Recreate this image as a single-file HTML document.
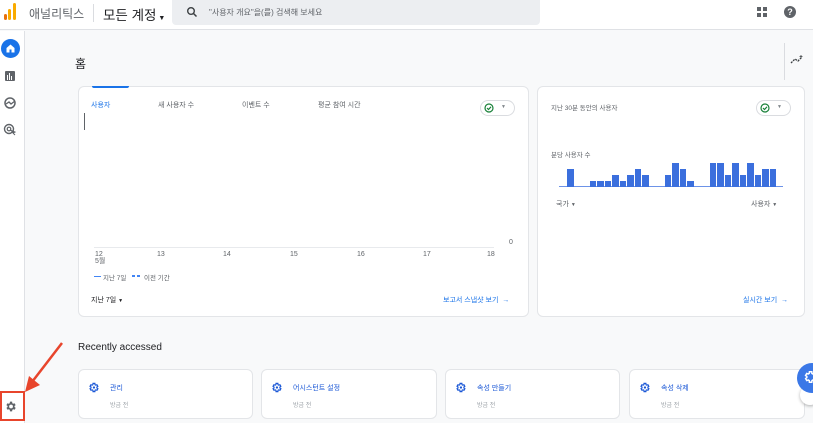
<!DOCTYPE html>
<html><head><meta charset="utf-8"><style>
*{margin:0;padding:0;box-sizing:border-box}
body{width:813px;height:423px;overflow:hidden;background:#f8f9fa;font-family:"Liberation Sans","Noto Sans CJK KR",sans-serif;position:relative;color:#3c4043}
.a{position:absolute}
.t{font-size:7px;color:#5f6368;white-space:nowrap}
.card{position:absolute;background:#fff;border:1px solid #e3e5e8;border-radius:6px}
.blue{color:#1a73e8}
.pill{position:absolute;width:35px;height:16px;border:1px solid #dadce0;border-radius:8px;background:#fff}
.bar{position:absolute;bottom:0;width:6.5px;margin-left:0.5px;background:#3b6fdd}
</style></head><body>
<!-- header -->
<div class="a" style="left:0;top:0;width:813px;height:30px;background:#fff;border-bottom:1px solid #dfe1e5"></div>
<div class="a" style="left:4px;top:14px;width:3px;height:6px;background:#e8710a;border-radius:2px"></div>
<div class="a" style="left:8px;top:9px;width:3px;height:11px;background:#f9ab00;border-radius:2px"></div>
<div class="a" style="left:13px;top:3px;width:3px;height:17px;background:#f9ab00;border-radius:2px"></div>
<div class="a" style="left:29px;top:5px;font-size:12px;color:#5f6368">애널리틱스</div>
<div class="a" style="left:93px;top:4px;width:1px;height:18px;background:#dadce0"></div>
<div class="a" style="left:103px;top:4px;font-size:13.5px;color:#202124">모든 계정<span style="font-size:7px"> ▼</span></div>
<div class="a" style="left:172px;top:0;width:368px;height:25px;background:#eceef1;border-radius:0 0 4px 4px"></div>
<svg class="a" style="left:186px;top:6px" width="12" height="12" viewBox="0 0 12 12"><circle cx="5" cy="5" r="3.3" fill="none" stroke="#3c4043" stroke-width="1.4"/><path d="M7.5 7.5L10.5 10.5" stroke="#3c4043" stroke-width="1.5"/></svg>
<div class="a" style="left:209px;top:7px;font-size:8px;color:#5f6368">"사용자 개요"을(를) 검색해 보세요</div>
<div class="a" style="left:757px;top:7px;width:4px;height:4px;background:#5f6368"></div>
<div class="a" style="left:763px;top:7px;width:4px;height:4px;background:#5f6368"></div>
<div class="a" style="left:757px;top:13px;width:4px;height:4px;background:#5f6368"></div>
<div class="a" style="left:763px;top:13px;width:4px;height:4px;background:#5f6368"></div>
<div class="a" style="left:784px;top:6px;width:12px;height:12px;border-radius:50%;background:#5f6368;color:#fff;font-size:9px;font-weight:bold;text-align:center;line-height:12px">?</div>
<!-- sidebar -->
<div class="a" style="left:0;top:31px;width:25px;height:392px;background:#fff;border-right:1px solid #dfe1e5"></div>
<div class="a" style="left:1px;top:39px;width:19px;height:19px;border-radius:50%;background:#1a73e8"></div>
<svg class="a" style="left:5px;top:43px" width="11" height="11" viewBox="0 0 11 11"><path d="M1.5 5L5.5 1.5L9.5 5V9.5H1.5Z" fill="#fff"/><rect x="4.5" y="6.5" width="2" height="3" fill="#1a73e8"/></svg>
<div class="a" style="left:5px;top:71px;width:10px;height:10px;background:#5f6368;border-radius:1px"></div>
<div class="a" style="left:7px;top:75px;width:1px;height:5px;background:#fff"></div>
<div class="a" style="left:9px;top:73px;width:1px;height:7px;background:#fff"></div>
<div class="a" style="left:11px;top:76px;width:1px;height:4px;background:#fff"></div>
<svg class="a" style="left:3px;top:96px" width="14" height="14" viewBox="0 0 14 14"><circle cx="7" cy="7" r="5" fill="none" stroke="#5f6368" stroke-width="1.5"/><path d="M3 8L6 6L8 8L12 5" fill="none" stroke="#5f6368" stroke-width="1.3"/></svg>
<svg class="a" style="left:3px;top:123px" width="14" height="14" viewBox="0 0 14 14"><circle cx="6" cy="6" r="4.5" fill="none" stroke="#5f6368" stroke-width="1.4"/><circle cx="6" cy="6" r="1.8" fill="none" stroke="#5f6368" stroke-width="1.2"/><path d="M7 7L12 9L10 10L12 12" fill="#5f6368" stroke="#5f6368" stroke-width="1"/></svg>
<svg class="a" style="left:4px;top:400px" width="13" height="13" viewBox="0 0 24 24"><path fill="#5f6368" d="M19.4 13a7.5 7.5 0 0 0 0-2l2.1-1.6-2-3.5-2.5 1a7 7 0 0 0-1.7-1L15 3h-4l-.4 2.9a7 7 0 0 0-1.7 1l-2.5-1-2 3.5L6.6 11a7.5 7.5 0 0 0 0 2l-2.1 1.6 2 3.5 2.5-1a7 7 0 0 0 1.7 1L11 21h4l.4-2.9a7 7 0 0 0 1.7-1l2.5 1 2-3.5zM13 15.5a3.5 3.5 0 1 1 0-7 3.5 3.5 0 0 1 0 7z"/></svg>
<div class="a" style="left:0;top:391px;width:25px;height:30px;border:2px solid #e8452c"></div>
<svg class="a" style="left:20px;top:340px" width="50" height="55" viewBox="0 0 50 55"><path d="M42 3L12 42" stroke="#e8452c" stroke-width="2.5"/><path d="M5 52L9 36L20 45Z" fill="#e8452c"/></svg>
<!-- title -->
<div class="a" style="left:75px;top:55px;font-size:12px;color:#202124">홈</div>
<div class="a" style="left:784px;top:43px;width:1px;height:37px;background:#dadce0"></div>
<svg class="a" style="left:790px;top:55px" width="14" height="10" viewBox="0 0 14 10"><path d="M1 8L5 4L8 6L12 2" fill="none" stroke="#3c4043" stroke-width="1.3" stroke-dasharray="2 1"/><path d="M11 0v3M9.5 1.5h3" stroke="#3c4043" stroke-width="0.8"/></svg>
<!-- card 1 -->
<div class="card" style="left:78px;top:86px;width:451px;height:231px"></div>
<div class="a" style="left:92px;top:86px;width:37px;height:2px;background:#1a73e8;border-radius:0 0 2px 2px"></div>
<div class="a t blue" style="left:91px;top:100px">사용자</div>
<div class="a t" style="left:158px;top:100px">새 사용자 수</div>
<div class="a t" style="left:242px;top:100px">이벤트 수</div>
<div class="a t" style="left:318px;top:100px">평균 참여 시간</div>
<div class="a" style="left:84px;top:113px;width:1px;height:17px;background:#5f6368"></div>
<div class="pill" style="left:480px;top:100px"></div>
<svg class="a" style="left:484px;top:103px" width="10" height="10" viewBox="0 0 10 10"><circle cx="5" cy="5" r="4" fill="none" stroke="#188038" stroke-width="1.2"/><path d="M3 5L4.5 6.5L7 3.8" fill="none" stroke="#188038" stroke-width="1.2"/></svg>
<div class="a" style="left:501px;top:104px;font-size:5px;color:#80868b">▼</div>
<div class="a" style="left:94px;top:247px;width:400px;height:1px;background:#e8eaed"></div>
<div class="a t" style="left:509px;top:239px">0</div>
<div class="a t" style="left:95px;top:251px;line-height:7px">12<br>5월</div>
<div class="a t" style="left:157px;top:251px">13</div>
<div class="a t" style="left:223px;top:251px">14</div>
<div class="a t" style="left:290px;top:251px">15</div>
<div class="a t" style="left:357px;top:251px">16</div>
<div class="a t" style="left:423px;top:251px">17</div>
<div class="a t" style="left:487px;top:251px">18</div>
<div class="a" style="left:94px;top:276px;width:7px;height:1px;background:#4285f4"></div>
<div class="a t" style="left:103px;top:272px;font-size:6.5px">지난 7일</div>
<div class="a" style="left:132px;top:275px;width:3px;height:2px;background:#4285f4"></div>
<div class="a" style="left:137px;top:275px;width:3px;height:2px;background:#4285f4"></div>
<div class="a t" style="left:144px;top:272px;font-size:6.5px">이전 기간</div>
<div class="a t" style="left:91px;top:295px;color:#202124">지난 7일 <span style="font-size:5px">▼</span></div>
<div class="a t blue" style="left:443px;top:295px">보고서 스냅샷 보기 &nbsp;→</div>
<!-- card 2 -->
<div class="card" style="left:537px;top:86px;width:268px;height:231px"></div>
<div class="a t" style="left:551px;top:102px;font-size:6.5px">지난 30분 동안의 사용자</div>
<div class="pill" style="left:756px;top:100px"></div>
<svg class="a" style="left:760px;top:103px" width="10" height="10" viewBox="0 0 10 10"><circle cx="5" cy="5" r="4" fill="none" stroke="#188038" stroke-width="1.2"/><path d="M3 5L4.5 6.5L7 3.8" fill="none" stroke="#188038" stroke-width="1.2"/></svg>
<div class="a" style="left:777px;top:104px;font-size:5px;color:#80868b">▼</div>
<div class="a t" style="left:551px;top:149px;font-size:6.5px">분당 사용자 수</div>
<div class="a" style="left:559px;top:186px;width:224px;height:1px;background:#6d93e8"></div>
<div class="a" style="left:559px;top:163px;width:224px;height:24px">
<div class="bar" style="left:7.5px;height:18px"></div>
<div class="bar" style="left:30px;height:6px"></div>
<div class="bar" style="left:37.5px;height:6px"></div>
<div class="bar" style="left:45px;height:6px"></div>
<div class="bar" style="left:52.5px;height:12px"></div>
<div class="bar" style="left:60px;height:6px"></div>
<div class="bar" style="left:67.5px;height:12px"></div>
<div class="bar" style="left:75px;height:18px"></div>
<div class="bar" style="left:82.5px;height:12px"></div>
<div class="bar" style="left:105px;height:12px"></div>
<div class="bar" style="left:112.5px;height:24px"></div>
<div class="bar" style="left:120px;height:18px"></div>
<div class="bar" style="left:127.5px;height:6px"></div>
<div class="bar" style="left:150px;height:24px"></div>
<div class="bar" style="left:157.5px;height:24px"></div>
<div class="bar" style="left:165px;height:12px"></div>
<div class="bar" style="left:172.5px;height:24px"></div>
<div class="bar" style="left:180px;height:12px"></div>
<div class="bar" style="left:187.5px;height:24px"></div>
<div class="bar" style="left:195px;height:12px"></div>
<div class="bar" style="left:202.5px;height:18px"></div>
<div class="bar" style="left:210px;height:18px"></div>
</div>
<div class="a t" style="left:556px;top:199px">국가 <span style="font-size:5px">▼</span></div>
<div class="a t" style="left:751px;top:199px">사용자 <span style="font-size:5px">▼</span></div>
<div class="a t blue" style="left:743px;top:295px">실시간 보기 &nbsp;→</div>
<!-- recently -->
<div class="a" style="left:78px;top:342px;font-size:10px;color:#202124">Recently accessed</div>
<div class="card" style="left:78px;top:369px;width:175px;height:50px"></div>
<div class="card" style="left:261px;top:369px;width:176px;height:50px"></div>
<div class="card" style="left:445px;top:369px;width:175px;height:50px"></div>
<div class="card" style="left:629px;top:369px;width:176px;height:50px"></div>
<svg class="a" style="left:88px;top:382px" width="11" height="11" viewBox="0 0 24 24"><path fill="none" stroke="#1a57d6" stroke-width="2.6" d="M19.4 13a7.5 7.5 0 0 0 0-2l2.1-1.6-2-3.5-2.5 1a7 7 0 0 0-1.7-1L15 3h-4l-.4 2.9a7 7 0 0 0-1.7 1l-2.5-1-2 3.5L6.6 11a7.5 7.5 0 0 0 0 2l-2.1 1.6 2 3.5 2.5-1a7 7 0 0 0 1.7 1L11 21h4l.4-2.9a7 7 0 0 0 1.7-1l2.5 1 2-3.5z"/><circle cx="13" cy="12" r="2.5" fill="#1a57d6"/></svg>
<svg class="a" style="left:271px;top:382px" width="11" height="11" viewBox="0 0 24 24"><path fill="none" stroke="#1a57d6" stroke-width="2.6" d="M19.4 13a7.5 7.5 0 0 0 0-2l2.1-1.6-2-3.5-2.5 1a7 7 0 0 0-1.7-1L15 3h-4l-.4 2.9a7 7 0 0 0-1.7 1l-2.5-1-2 3.5L6.6 11a7.5 7.5 0 0 0 0 2l-2.1 1.6 2 3.5 2.5-1a7 7 0 0 0 1.7 1L11 21h4l.4-2.9a7 7 0 0 0 1.7-1l2.5 1 2-3.5z"/><circle cx="13" cy="12" r="2.5" fill="#1a57d6"/></svg>
<svg class="a" style="left:455px;top:382px" width="11" height="11" viewBox="0 0 24 24"><path fill="none" stroke="#1a57d6" stroke-width="2.6" d="M19.4 13a7.5 7.5 0 0 0 0-2l2.1-1.6-2-3.5-2.5 1a7 7 0 0 0-1.7-1L15 3h-4l-.4 2.9a7 7 0 0 0-1.7 1l-2.5-1-2 3.5L6.6 11a7.5 7.5 0 0 0 0 2l-2.1 1.6 2 3.5 2.5-1a7 7 0 0 0 1.7 1L11 21h4l.4-2.9a7 7 0 0 0 1.7-1l2.5 1 2-3.5z"/><circle cx="13" cy="12" r="2.5" fill="#1a57d6"/></svg>
<svg class="a" style="left:639px;top:382px" width="11" height="11" viewBox="0 0 24 24"><path fill="none" stroke="#1a57d6" stroke-width="2.6" d="M19.4 13a7.5 7.5 0 0 0 0-2l2.1-1.6-2-3.5-2.5 1a7 7 0 0 0-1.7-1L15 3h-4l-.4 2.9a7 7 0 0 0-1.7 1l-2.5-1-2 3.5L6.6 11a7.5 7.5 0 0 0 0 2l-2.1 1.6 2 3.5 2.5-1a7 7 0 0 0 1.7 1L11 21h4l.4-2.9a7 7 0 0 0 1.7-1l2.5 1 2-3.5z"/><circle cx="13" cy="12" r="2.5" fill="#1a57d6"/></svg>
<div class="a t blue" style="left:110px;top:383px;color:#1a57d6">관리</div>
<div class="a t" style="left:110px;top:400px;font-size:6px;color:#9aa0a6">방금 전</div>
<div class="a t blue" style="left:293px;top:383px;color:#1a57d6">어시스턴트 설정</div>
<div class="a t" style="left:293px;top:400px;font-size:6px;color:#9aa0a6">방금 전</div>
<div class="a t blue" style="left:477px;top:383px;color:#1a57d6">속성 만들기</div>
<div class="a t" style="left:477px;top:400px;font-size:6px;color:#9aa0a6">방금 전</div>
<div class="a t blue" style="left:661px;top:383px;color:#1a57d6">속성 삭제</div>
<div class="a t" style="left:661px;top:400px;font-size:6px;color:#9aa0a6">방금 전</div>
<!-- fab -->
<div class="a" style="left:800px;top:385px;width:20px;height:20px;border-radius:50%;background:#fff;box-shadow:0 1px 3px rgba(0,0,0,.3)"></div>
<div class="a" style="left:797px;top:363px;width:30px;height:30px;border-radius:50%;background:#3b78e7"></div>
<svg class="a" style="left:803px;top:370px" width="14" height="14" viewBox="0 0 24 24"><path fill="none" stroke="#fff" stroke-width="2.6" d="M19.4 13a7.5 7.5 0 0 0 0-2l2.1-1.6-2-3.5-2.5 1a7 7 0 0 0-1.7-1L15 3h-4l-.4 2.9a7 7 0 0 0-1.7 1l-2.5-1-2 3.5L6.6 11a7.5 7.5 0 0 0 0 2l-2.1 1.6 2 3.5 2.5-1a7 7 0 0 0 1.7 1L11 21h4l.4-2.9a7 7 0 0 0 1.7-1l2.5 1 2-3.5z"/></svg>
</body></html>
